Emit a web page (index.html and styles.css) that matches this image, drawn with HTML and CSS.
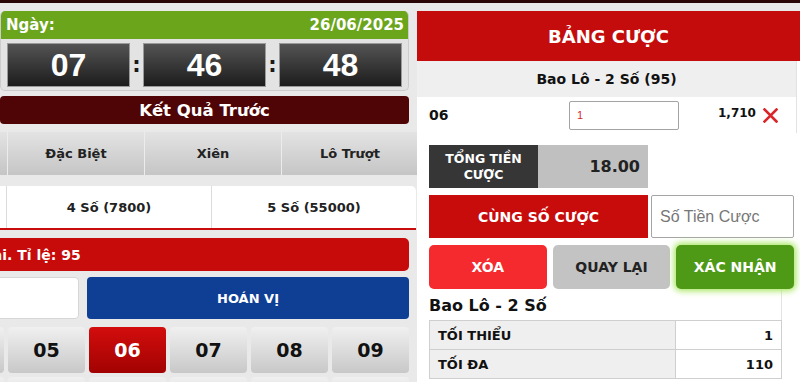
FILE: index.html
```html
<!DOCTYPE html>
<html lang="vi">
<head>
<meta charset="utf-8">
<title>Bảng cược</title>
<link rel="stylesheet" href="styles.css">
</head>
<body>
<div class="topbar"></div>
<div class="main">
  <div class="left">
    <div class="clock">
      <div class="date"><span>Ngày:</span><span>26/06/2025</span></div>
      <div class="timer">
        <div class="dg">07</div><div class="colon">:</div>
        <div class="dg">46</div><div class="colon">:</div>
        <div class="dg">48</div>
      </div>
    </div>
    <div class="prev">Kết Quả Trước</div>
    <div class="scroller">
      <div class="tabs">
        <div class="tab">Bao Lô</div>
        <div class="tab">Đặc Biệt</div>
        <div class="tab">Xiên</div>
        <div class="tab">Lô Trượt</div>
      </div>
      <div class="subtabs">
        <div class="sub">3 Số (650)</div>
        <div class="sub">4 Số (7800)</div>
        <div class="sub">5 Số (55000)</div>
      </div>
      <div class="note"><span class="cut"><span>Chọn 2 số cuối của giải</span></span><span>. Tỉ lệ: 95</span></div>
      <div class="pick">
        <div class="numin"></div>
        <div class="hoanvi">HOÁN VỊ</div>
      </div>
      <div class="nums">
        <div class="nb">04</div><div class="nb">05</div><div class="nb on">06</div><div class="nb">07</div><div class="nb">08</div><div class="nb">09</div>
      </div>
      <div class="nums">
        <div class="nb">10</div><div class="nb">11</div><div class="nb">12</div><div class="nb">13</div><div class="nb">14</div><div class="nb">15</div>
      </div>
    </div>
  </div>
  <div class="right">
    <div class="bhead">BẢNG CƯỢC</div>
    <div class="list">
      <div class="lsub">Bao Lô - 2 Số (95)</div>
      <div class="lrow">
        <div class="lnum">06</div>
        <div class="lin">1</div>
        <div class="lamt">1,710</div>
        <svg class="lx" width="15" height="15" viewBox="0 0 15 15"><path d="M1.5 1.5 L13.5 13.5 M13.5 1.5 L1.5 13.5" stroke="#d8262b" stroke-width="2.6" stroke-linecap="square" fill="none"/></svg>
      </div>
    </div>
    <div class="rbody">
      <div class="total">
        <div class="tl">TỔNG TIỀN<br>CƯỢC</div>
        <div class="tv">18.00</div>
      </div>
      <div class="same">
        <div class="sbtn">CÙNG SỐ CƯỢC</div>
        <div class="sin">Số Tiền Cược</div>
      </div>
      <div class="acts">
        <div class="ab del">XÓA</div>
        <div class="ab back">QUAY LẠI</div>
        <div class="ab ok">XÁC NHẬN</div>
      </div>
      <div class="sec">
        <div class="stitle">Bao Lô - 2 Số</div>
        <table class="lim">
          <tr><td class="k">TỐI THIỂU</td><td class="v">1</td></tr>
          <tr><td class="k">TỐI ĐA</td><td class="v">110</td></tr>
        </table>
      </div>
    </div>
  </div>
</div>
</body>
</html>
```

FILE: styles.css
```css
* { box-sizing: border-box; }
html, body { margin: 0; padding: 0; }
body {
  width: 800px;
  height: 382px;
  overflow: hidden;
  background: #e9e9e9;
  font-family: "DejaVu Sans", sans-serif;
  font-weight: bold;
  color: #1c1c1c;
}
.topbar { height: 3px; background: #2b0606; }
.main { display: flex; align-items: flex-start; padding-top: 8px; }
.left { width: 409px; flex: none; margin-right: 8px; }

.clock {
  border: 1px solid #cdcdcd;
  border-top: 0;
  border-radius: 5px;
  overflow: hidden;
  background: #e3e3e3;
}
.date {
  height: 28px;
  background: #6ba51c;
  color: #fff;
  font-size: 15px;
  display: flex;
  align-items: center;
  justify-content: space-between;
  padding: 0 4px 0 5px;
}
.timer { display: flex; padding: 4px 6px 3px 6px; }
.dg {
  width: 123px;
  height: 44px;
  background: linear-gradient(#545454, #1c1c1c);
  border: 1px solid #9a9a9a;
  color: #fff;
  font-family: "Liberation Sans", sans-serif;
  font-size: 32px;
  display: flex;
  align-items: center;
  justify-content: center;
}
.colon {
  width: 13px;
  display: flex;
  align-items: center;
  justify-content: center;
  font-size: 21px;
  color: #1a1a1a;
}
.prev {
  margin-top: 5px;
  height: 28px;
  background: #4f0505;
  border-radius: 4px;
  color: #fff;
  font-size: 16.5px;
  display: flex;
  align-items: center;
  justify-content: center;
}
.scroller { width: 417px; overflow: hidden; margin-top: 8px; }
.tabs {
  display: flex;
  margin-left: -130px;
  width: 548px;
  height: 43px;
  background: linear-gradient(#e3e3e3, #c5c5c5);
}
.tab {
  width: 137px;
  border-left: 1px solid #ececec;
  display: flex;
  align-items: center;
  justify-content: center;
  font-size: 13px;
  color: #222;
}
.subtabs {
  margin-top: 11px;
  display: flex;
  margin-left: -199px;
  width: 615px;
  height: 44px;
  background: #fff;
  border-bottom: 2px solid #c80b0b;
  border-radius: 5px 5px 0 0;
}
.sub {
  flex: 1;
  border-left: 1px solid #dcdcdc;
  display: flex;
  align-items: center;
  justify-content: center;
  font-size: 13px;
  color: #222;
}
.note {
  margin-top: 8px;
  margin-left: -10px;
  width: 419px;
  height: 33px;
  background: #c70b0b;
  border-radius: 5px;
  overflow: hidden;
  display: flex;
  align-items: center;
  color: #fff;
  font-size: 14px;
  white-space: nowrap;
}
.cut { width: 17px; flex: none; display: flex; justify-content: flex-end; }
.pick { margin-top: 6px; display: flex; gap: 8px; width: 409px; height: 42px; }
.numin {
  width: 200px;
  flex: none;
  margin-left: -121px;
  background: #fff;
  border: 1px solid #d6d6d6;
  border-radius: 4px;
}
.hoanvi {
  flex: 1;
  background: #0e3f95;
  border-radius: 4px;
  color: #fff;
  font-size: 13px;
  display: flex;
  align-items: center;
  justify-content: center;
}
.nums { margin-top: 8px; display: flex; gap: 4px; margin-left: -73px; }
.nums + .nums { margin-top: 4px; }
.nb {
  width: 77px;
  height: 46px;
  flex: none;
  border-radius: 4px;
  background: linear-gradient(#f0f0f0, #c8c8c8);
  display: flex;
  align-items: center;
  justify-content: center;
  font-size: 19px;
  color: #111;
}
.nb.on { background: linear-gradient(#d30d0d, #a20202); color: #fff; }

.right { width: 383px; flex: none; height: 371px; background: #fff; }
.bhead {
  height: 50px;
  background: #c40c0c;
  color: #fff;
  font-size: 18px;
  display: flex;
  align-items: center;
  justify-content: center;
}
.list { width: 380px; border-right: 1px solid #e2e2e2; }
.lsub {
  height: 36px;
  background: #efefef;
  display: flex;
  align-items: center;
  justify-content: center;
  font-size: 14px;
  color: #111;
}
.lrow { height: 36px; display: flex; align-items: center; padding-left: 12px; }
.lnum { width: 140px; font-size: 14px; color: #111; }
.lin {
  width: 110px;
  height: 29px;
  border: 1px solid #a3a3a3;
  border-radius: 2px;
  padding-left: 7px;
  display: flex;
  align-items: center;
  font-family: "Liberation Sans", sans-serif;
  font-weight: normal;
  font-size: 11px;
  color: #d42a2a;
}
.lamt { margin-left: 39px; font-size: 12px; color: #111; margin-bottom: 5px; }
.lx { margin-left: 7px; }

.rbody { padding-left: 12px; }
.total { margin-top: 12px; display: flex; width: 219px; height: 43px; }
.tl {
  width: 109px;
  background: #363636;
  color: #fff;
  font-size: 12.5px;
  line-height: 16px;
  text-align: center;
  display: flex;
  align-items: center;
  justify-content: center;
}
.tv {
  flex: 1;
  background: #c0c0c0;
  display: flex;
  align-items: center;
  justify-content: flex-end;
  padding-right: 8px;
  font-size: 16px;
  color: #222;
}
.same { margin-top: 7px; display: flex; gap: 3px; height: 43px; }
.sbtn {
  width: 219px;
  background: #c80b0b;
  color: #fff;
  font-size: 14px;
  display: flex;
  align-items: center;
  justify-content: center;
}
.sin {
  width: 143px;
  border: 1px solid #a5a5a5;
  border-radius: 2px;
  padding-left: 8px;
  display: flex;
  align-items: center;
  font-family: "Liberation Sans", sans-serif;
  font-weight: normal;
  font-size: 16px;
  color: #777;
}
.acts { margin-top: 7px; display: flex; gap: 6px; height: 44px; width: 365px; }
.ab {
  flex: 1;
  border-radius: 5px;
  display: flex;
  align-items: center;
  justify-content: center;
  font-size: 14px;
}
.del { background: #f42a2f; color: #fff; }
.back { background: #c3c3c3; color: #222; }
.ok { background: #4e9a17; color: #fff; box-shadow: 0 0 6px 2px #a6e65e; }
.sec { margin-top: 1px; width: 353px; border-right: 1px solid #e3e3e3; }
.stitle { height: 30px; display: flex; align-items: center; font-size: 16px; color: #111; }
.lim { width: 353px; border-collapse: collapse; }
.lim td { height: 29px; border: 1px solid #cfcfcf; font-size: 13px; color: #111; padding: 0 8px; }
.lim .k { background: #efefef; }
.lim .v { width: 106px; text-align: right; background: #fff; }
```
